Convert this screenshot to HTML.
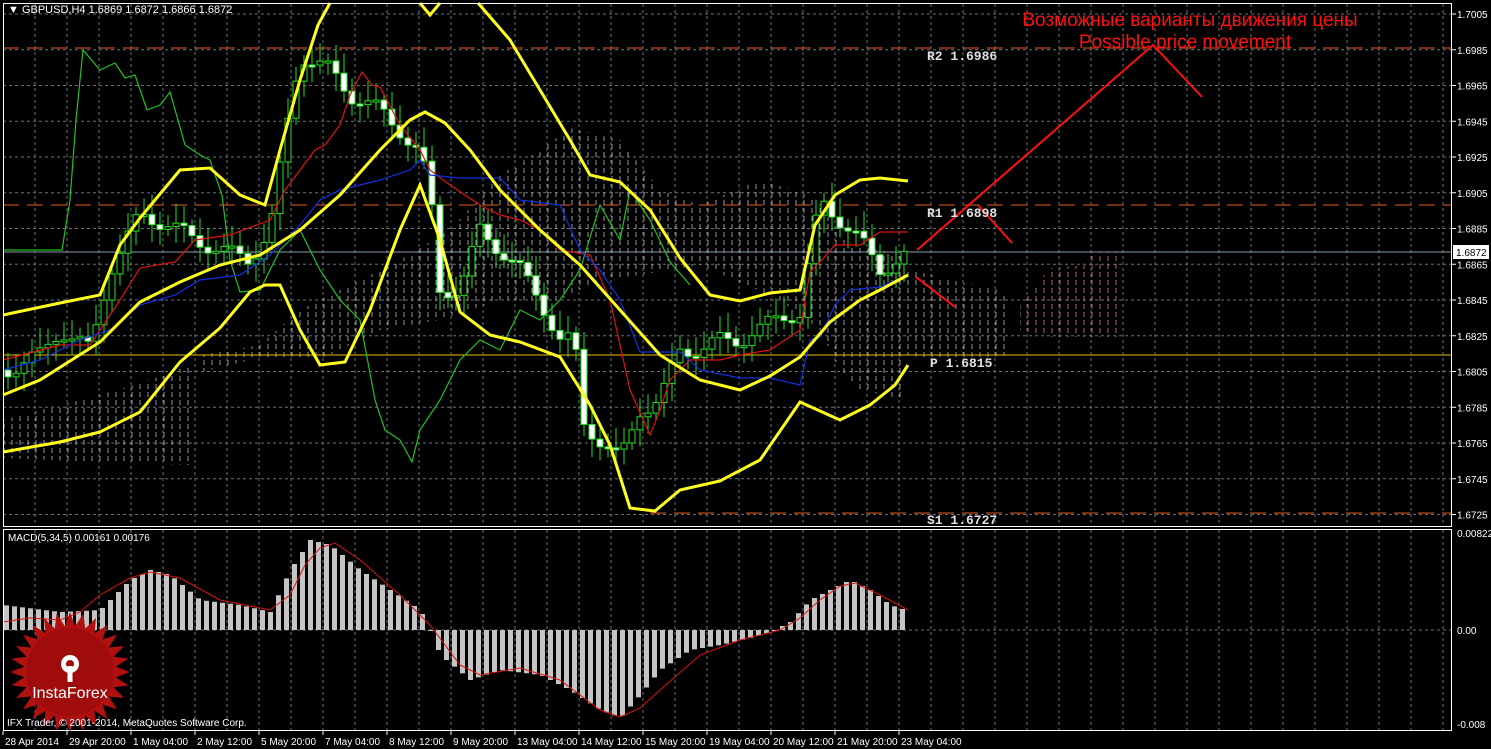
<!DOCTYPE html>
<html><head><meta charset="utf-8"><style>
html,body{margin:0;padding:0;background:#000;}
svg{display:block;font-family:"Liberation Sans",sans-serif;}
</style></head><body>
<svg id="c" width="1491" height="749" xmlns="http://www.w3.org/2000/svg">
<defs>
<pattern id="hatch" width="8" height="8" patternUnits="userSpaceOnUse">
<line x1="4" y1="0" x2="4" y2="5" stroke="#d8d8d8" stroke-width="1"/>
</pattern>
<pattern id="hatch2" width="8" height="8" patternUnits="userSpaceOnUse">
<line x1="4" y1="0" x2="4" y2="5" stroke="#e8a070" stroke-width="1"/>
</pattern>
</defs>
<rect width="1491" height="749" fill="#000"/>
<g id="grid"></g>
<g opacity="0.7">
<polygon fill="url(#hatch)" points="3,420 60,405 100,395 150,380 190,365 190,465 100,462 3,458"/>
<polygon fill="url(#hatch)" points="200,355 260,345 300,310 340,290 400,260 450,230 500,175 500,300 440,320 380,330 320,360 260,358 200,372"/>
<polygon fill="url(#hatch)" points="500,175 540,150 570,128 620,140 660,190 700,205 760,180 810,195 850,245 905,255 905,400 860,390 840,370 820,330 780,300 700,265 640,275 600,280 560,300 500,300"/>
<polygon fill="url(#hatch)" points="905,268 950,280 1000,290 1010,305 1010,355 950,362 905,355"/>
<polygon fill="url(#hatch2)" points="1020,305 1050,268 1085,265 1090,252 1118,252 1118,337 1050,337 1020,330"/>
</g>
<line x1="3" y1="48" x2="1452" y2="48" stroke="#e05a20" stroke-dasharray="16,8" stroke-width="1"/>
<line x1="3" y1="205" x2="1452" y2="205" stroke="#e05a20" stroke-dasharray="16,8" stroke-width="1"/>
<line x1="3" y1="355" x2="1452" y2="355" stroke="#e8c000" stroke-width="1"/>
<line x1="650" y1="513" x2="1452" y2="513" stroke="#e05a20" stroke-dasharray="16,8" stroke-width="1"/>
<line x1="3" y1="252" x2="1452" y2="252" stroke="#8898a8" stroke-width="1"/>
<g id="candles"></g>
<polyline fill="none" stroke="#22c022" stroke-width="1.2" points="3,250 62,250 70,200 76,120 83,50 100,70 115,63 125,78 135,75 147,110 160,105 170,92 185,145 200,155 210,160 222,195 230,260 240,292 260,290 280,250 300,230 320,270 340,300 360,320 375,400 385,430 400,440 412,462 420,430 440,400 460,360 480,340 500,350 520,310 540,320 560,300 580,270 600,205 620,240 630,190 650,220 670,262 690,285"/>
<polyline fill="none" stroke="#e01010" stroke-width="1.2" points="3,360 60,345 90,345 120,300 140,268 175,262 195,240 230,235 270,220 285,190 300,170 315,150 325,145 340,125 350,95 362,72 372,85 380,87 400,125 420,150 430,170 450,185 480,205 500,215 520,220 540,230 560,250 590,255 610,300 630,390 650,435 660,410 670,380 690,360 720,360 740,355 770,350 800,330 810,272 820,262 835,245 860,245 880,232 908,232"/>
<polyline fill="none" stroke="#1030e0" stroke-width="1.2" points="3,370 40,360 80,340 110,330 140,305 175,295 200,280 240,275 270,255 300,225 320,200 340,190 380,180 410,170 420,160 430,175 460,178 500,178 520,200 560,205 580,250 600,270 620,300 640,352 680,352 700,370 740,378 770,378 800,385 810,340 820,337 835,305 850,290 880,287 908,275"/>
<g fill="none" stroke="#ffff20" stroke-width="3">
<polyline points="3,315 60,303 100,295 120,245 140,218 180,170 210,168 240,195 265,205 280,150 300,80 318,25 330,3"/>
<polyline points="420,3 430,15 440,3"/>
<polyline points="478,3 510,40 540,90 570,140 590,175 620,182 650,210 680,258 710,295 740,301 770,293 800,290 815,225 835,195 860,180 880,178 908,181"/>
<polyline points="3,395 40,380 100,342 140,302 180,282 220,265 260,255 300,230 340,195 380,150 410,120 425,112 445,123 470,150 500,190 540,230 580,265 620,310 660,355 700,380 740,390 770,376 800,357 830,322 860,300 880,290 908,275"/>
<polyline points="3,452 60,442 100,432 140,412 180,362 220,328 250,292 265,285 280,285 300,330 320,365 345,362 370,310 400,230 420,185 440,240 460,312 490,335 520,342 560,357 590,405 610,445 630,508 655,511 680,490 720,481 760,460 800,402 820,411 840,420 870,405 895,385 908,365"/>
</g>
<g stroke="#ff1010" stroke-width="2" fill="none">
<polyline points="917,250 1153,45 1202,97"/>
<line x1="978" y1="205" x2="1012" y2="243"/>
<line x1="916" y1="277" x2="955" y2="307"/>
</g>
<text x="1190" y="26" fill="#ff1010" font-size="19" text-anchor="middle">Возможные варианты движения цены</text>
<text x="1185" y="48" fill="#ff1010" font-size="19" text-anchor="middle">Possible price movement</text>
<g fill="#e0e0e0" font-size="13" font-family="Liberation Mono,monospace" font-weight="bold">
<text x="927" y="60">R2 1.6986</text>
<text x="927" y="217">R1 1.6898</text>
<text x="930" y="367">P 1.6815</text>
<text x="927" y="524">S1 1.6727</text>
</g>
<g id="macd"></g>
<polyline fill="none" stroke="#e01010" stroke-width="1" points="3,622 30,618 60,620 80,612 100,595 130,578 150,572 180,578 220,600 270,610 290,595 305,565 320,548 335,543 360,560 400,595 430,625 460,665 480,675 520,668 560,680 600,710 620,717 640,708 660,690 700,655 740,640 780,630 800,618 820,600 840,586 855,583 880,595 908,610"/>
<rect x="3.5" y="3.5" width="1448" height="523" fill="none" stroke="#fff" stroke-width="1"/>
<rect x="3.5" y="529.5" width="1448" height="201" fill="none" stroke="#fff" stroke-width="1"/>
<g id="axis" fill="#fff" font-size="10"></g>
<text x="8" y="13" fill="#fff" font-size="11">▼ GBPUSD,H4  1.6869 1.6872 1.6866 1.6872</text>
<text x="8" y="541" fill="#fff" font-size="10">MACD(5,34,5) 0.00161 0.00176</text>
<g transform="translate(70,672)">
<polygon id="star" fill="#b01010"/>
<circle r="44" fill="#a00c0c"/>
<g fill="#fff">
<circle cx="0" cy="-8" r="9"/><circle cx="0" cy="-8" r="4" fill="#a00c0c"/>
<rect x="-2.5" y="-6" width="5" height="16"/>
</g>
<text x="0" y="26" fill="#fff" font-size="16" text-anchor="middle">InstaForex</text>
</g>
<text x="7" y="726" fill="#fff" font-size="10">IFX Trader, © 2001-2014, MetaQuotes Software Corp.</text>
<rect x="1453" y="245" width="36" height="14" fill="#fff"/>
<text x="1456" y="256" fill="#000" font-size="10">1.6872</text>
</svg>
<script>
var NS="http://www.w3.org/2000/svg";
function el(p,t,a,txt){var e=document.createElementNS(NS,t);for(var k in a)e.setAttribute(k,a[k]);if(txt)e.textContent=txt;document.getElementById(p).appendChild(e);return e;}
(function(){
for(var i=0;i<15;i++){var y=14+i*35.75;el("grid","line",{x1:3,x2:1452,y1:y,y2:y,stroke:"#6a7078","stroke-dasharray":"3,3"});
el("axis","text",{x:1457,y:y+4},(1.7005-i*0.002).toFixed(4));el("axis","line",{x1:1452,x2:1456,y1:y,y2:y,stroke:"#fff"});}
for(var x=35;x<1452;x+=32){el("grid","line",{x1:x,x2:x,y1:4,y2:526,stroke:"#6a7078","stroke-dasharray":"3,3"});el("grid","line",{x1:x,x2:x,y1:530,y2:730,stroke:"#6a7078","stroke-dasharray":"3,3"});}
el("grid","line",{x1:3,x2:1452,y1:630,y2:630,stroke:"#6a7078","stroke-dasharray":"3,3"});
[["0.00822",537],["0.00",634],["-0.008",728]].forEach(function(a){el("axis","text",{x:1457,y:a[1]},a[0]);});
var tl=["28 Apr 2014","29 Apr 20:00","1 May 04:00","2 May 12:00","5 May 20:00","7 May 04:00","8 May 12:00","9 May 20:00","13 May 04:00","14 May 12:00","15 May 20:00","19 May 04:00","20 May 12:00","21 May 20:00","23 May 04:00"];
tl.forEach(function(t,i){el("axis","text",{x:5+i*64,y:745},t);el("axis","line",{x1:3+i*64,x2:3+i*64,y1:731,y2:735,stroke:"#fff"});});
function interp(pts,x){for(var i=0;i<pts.length-1;i++){if(x>=pts[i][0]&&x<=pts[i+1][0]){var t=(x-pts[i][0])/(pts[i+1][0]-pts[i][0]);return pts[i][1]+t*(pts[i+1][1]-pts[i][1]);}}return pts[pts.length-1][1];}
var cp=[[8,370],[40,355],[60,330],[90,350],[110,270],[140,215],[170,225],[195,240],[220,250],[250,260],[270,230],[290,110],[300,55],[330,70],[350,95],[380,110],[400,130],[420,155],[430,190],[440,290],[460,290],[480,230],[500,250],[520,270],[540,300],[560,340],[575,340],[580,420],[600,440],[620,460],[640,410],[660,400],[680,350],[700,350],[720,340],[740,340],[760,330],[780,315],[800,315],[820,200],[840,220],[860,240],[880,270],[905,255]];
var prev=370;
for(var x=8;x<=905;x+=8){var c=interp(cp,x)+Math.sin(x*1.7)*8;var o=prev;var hi=Math.min(o,c)-6-Math.abs(Math.sin(x*0.9))*14;var lo=Math.max(o,c)+6+Math.abs(Math.cos(x*1.3))*12;
el("candles","line",{x1:x,x2:x,y1:hi,y2:lo,stroke:"#22e022"});
var bt=Math.min(o,c),h=Math.max(2,Math.abs(o-c));
el("candles","rect",{x:x-3,y:bt,width:6,height:h,fill:(c<o?"#000":"#fff"),stroke:"#22e022"});prev=c;}
var mp=[[3,605],[60,612],[100,610],[130,580],[150,570],[170,575],[200,600],[240,605],[270,612],[290,570],[310,540],[330,545],[360,570],[390,590],[420,610],[430,630],[440,655],[470,680],[500,670],[540,675],[570,690],[600,710],[620,718],[640,695],[660,670],[690,650],[720,645],[750,638],[770,632],[790,622],[810,600],[830,590],[850,580],[870,590],[890,605],[905,610]];
for(var x=6;x<=908;x+=8){var y=interp(mp,x);el("macd","rect",{x:x-2,y:Math.min(y,630),width:5,height:Math.max(1,Math.abs(630-y)),fill:"#c4c4c4"});}
var pts=[];for(var i=0;i<56;i++){var a=i*Math.PI/28,r=(i%2?46:60);pts.push((r*Math.sin(a)).toFixed(1)+","+(-r*Math.cos(a)).toFixed(1));}
document.getElementById("star").setAttribute("points",pts.join(" "));
})();
</script>
</body></html>
